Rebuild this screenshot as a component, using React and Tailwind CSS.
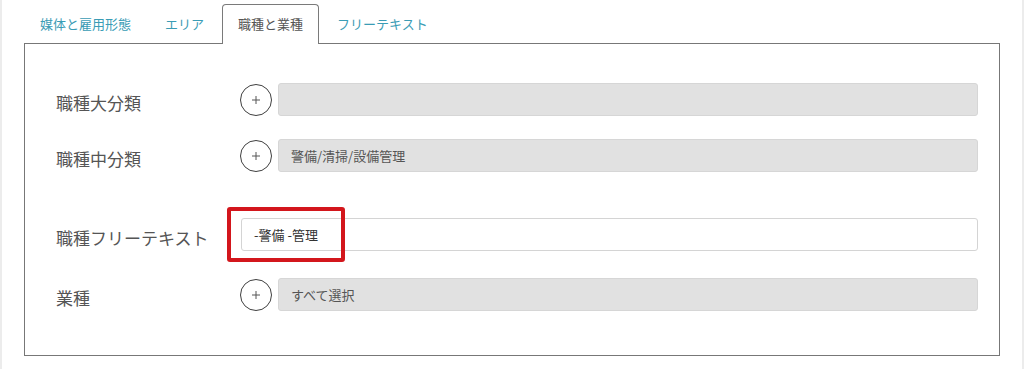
const tabs = [
  { label: "媒体と雇用形態", active: false },
  { label: "エリア", active: false },
  { label: "職種と業種", active: true },
  { label: "フリーテキスト", active: false },
];

const font = { fontFamily: '"Noto Sans CJK JP", "Noto Sans", sans-serif' };

function PlusButton() {
  return (
    <button className="flex h-[32px] w-[32px] shrink-0 items-center justify-center rounded-full border-[1.5px] border-[#3f3f3f] bg-white">
      <svg width="10" height="10" viewBox="0 0 10 10">
        <path d="M5 1v8M1 5h8" stroke="#555" strokeWidth="1" />
      </svg>
    </button>
  );
}

function SelectRow({ label, value, className = "" }) {
  return (
    <div className={`flex items-center ${className}`}>
      <div className="w-[184px] shrink-0 pt-[6px] text-[17px] text-[#555]">{label}</div>
      <PlusButton />
      <div className="ml-[6px] flex h-[33px] flex-1 items-center rounded-[3px] border border-[#d6d6d6] bg-[#e1e1e1] px-[12px] text-[13px] text-[#555]">
        {value}
      </div>
    </div>
  );
}

export default function App() {
  return (
    <div
      className="min-h-[369px] border-l-2 border-r-2 border-[#ececec] bg-white pl-[22px] pr-[22px] pt-[4px]"
      style={font}
    >
      <ul className="flex">
        {tabs.map((t) => (
          <li key={t.label} className="mr-[2px] mb-[-1px]">
            <a
              className={
                t.active
                  ? "block rounded-t-[4px] border border-b-0 border-[#7a7a7a] bg-white px-[15px] pt-[10px] pb-[11px] text-[13px] leading-[18px] text-[#555]"
                  : "block border border-transparent px-[15px] py-[10px] text-[13px] leading-[18px] text-[#3a9cb5]"
              }
            >
              {t.label}
            </a>
          </li>
        ))}
      </ul>

      <div className="border border-[#777] pt-[39px] pb-[44px] pl-[31px] pr-[21px]">
        <SelectRow label="職種大分類" value="" />
        <SelectRow label="職種中分類" value="警備/清掃/設備管理" className="mt-[23px]" />

        <div className="mt-[46px] flex items-center">
          <div className="w-[185px] shrink-0 pt-[6px] text-[17px] text-[#555]">職種フリーテキスト</div>
          <div className="relative flex-1">
            <div className="flex h-[33px] items-center rounded-[3px] border border-[#d4d4d4] bg-white px-[12px] text-[13px] text-[#333]">
              -警備 -管理
            </div>
            <div className="pointer-events-none absolute left-[-14px] top-[-11px] h-[55px] w-[118px] rounded-[3px] border-[4px] border-[#d3161c]" />
          </div>
        </div>

        <SelectRow label="業種" value="すべて選択" className="mt-[27px]" />
      </div>
    </div>
  );
}
